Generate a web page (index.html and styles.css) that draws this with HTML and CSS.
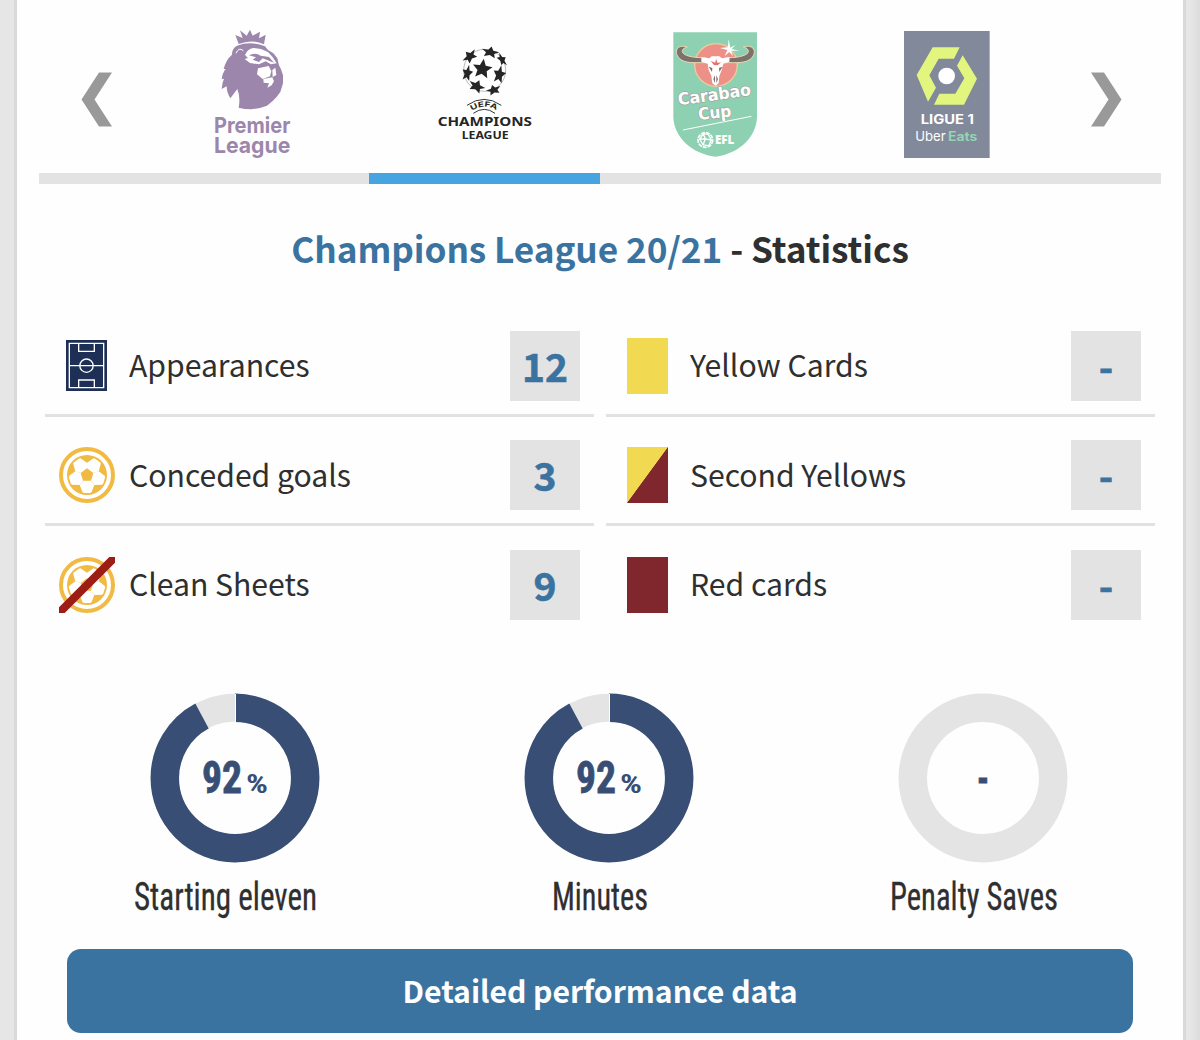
FILE: index.html
```html
<!DOCTYPE html>
<html lang="en">
<head>
<meta charset="utf-8">
<title>Champions League 20/21 - Statistics</title>
<link rel="stylesheet" href="styles.css">
</head>
<body>
<svg width="0" height="0" class="defs" aria-hidden="true">
  <defs>
    <polygon id="star" points="0,-10 2.8,-3.6 9.5,-3.1 4.5,1.5 5.9,8.1 0,4.7 -5.9,8.1 -4.5,1.5 -9.5,-3.1 -2.8,-3.6"/>
    <polygon id="lobe" points="0,0 -21.7,30 -13.5,52 -9,54 9,54 13.5,52 21.7,30"/>
    <g id="ball">
      <circle r="78" fill="#fff" stroke="#f1ba43" stroke-width="12"/>
      <circle r="60" fill="#f1ba43"/>
      <g fill="#fff">
        <use href="#lobe"/><use href="#lobe" transform="rotate(72)"/><use href="#lobe" transform="rotate(144)"/><use href="#lobe" transform="rotate(216)"/><use href="#lobe" transform="rotate(288)"/>
      </g>
      <polygon points="0,-20 19,-6 12,17 -12,17 -19,-6" fill="#f1ba43"/>
    </g>
  </defs>
</svg>
<main class="card">
  <nav class="tabs">
    <button class="arrow" aria-label="Previous"><svg width="99" height="173" viewBox="39 0 99 173"><path d="M99 72.500h13L94.500 99.500 112 126.500H99L81.500 99.500z" fill="#999"/></svg></button>
    <a class="tab">
      <svg width="231" height="173" viewBox="138 0 231 173">
        <g transform="translate(200 20) scale(.33333)">
          <path fill="#9c86ab" d="M116 72L106 45 128 54 120 31 140 47 150 29 158 47 180 35 177 55 197 44 192 73Q155 56 116 72z"/>
          <path fill="#9c86ab" d="M111 77Q153 62 195 79L204 90 220 100 232 115 237 136 243 148 249 166 249 190 241 216 229 232 218 243 201 257 180 264 154 268 134 267 116 263Q122 231 112 207L91 235Q80 218 80 199L65 207Q66 189 72 176L65 178Q67 159 77 147L71 147Q78 119 96 104Q96 84 111 77z"/>
          <path fill="#fff" d="M135 105Q142 87 160 84L183 87 204 96 217 110 230 130 213 133 197 124 177 133 150 129 134 117 144 114z"/>
          <path fill="#9c86ab" d="M147 106Q166 96 182 107L207 111 222 128 203 121 188 115 177 126 158 119 168 112z"/>
          <path fill="#fff" d="M174 145L206 138 214 153 210 169 188 177 171 163zM217 150L226 143 229 165 218 171zM190 177L217 172 222 184 215 196 202 203 207 190 191 188z"/>
          <path fill="none" stroke="#fff" stroke-width="3" d="M108 100Q116 80 130 92"/>
          <text x="42" y="340" class="logo-name" textLength="229" lengthAdjust="spacingAndGlyphs">Premier</text>
          <text x="42" y="399" class="logo-name" textLength="229" lengthAdjust="spacingAndGlyphs">League</text>
        </g>
      </svg>
    </a>
    <a class="tab active">
      <svg width="231" height="173" viewBox="369 0 231 173">
        <g transform="translate(425 35) scale(.33333)" fill="#252525">
          <circle cx="179" cy="106" r="63" fill="none" stroke="#999" stroke-width="2"/>
          <use href="#star" transform="translate(172 102) rotate(8) scale(3.1)"/>
          <use href="#star" transform="translate(196 52) rotate(12) scale(2.800 1.800)"/>
          <use href="#star" transform="translate(135 64) rotate(-42) scale(2.600 1.900)"/>
          <use href="#star" transform="translate(127 115) rotate(12) scale(1.700 2.600)"/>
          <use href="#star" transform="translate(155 154) rotate(24) scale(2.700 2)"/>
          <use href="#star" transform="translate(206 165) rotate(-18) scale(2.400 1.600)"/>
          <use href="#star" transform="translate(223 119) rotate(12) scale(2 2.900)"/>
          <use href="#star" transform="translate(231 74) rotate(58) scale(2.300 1.300)"/>
          <g fill="none" stroke="#333" stroke-width="3"><path d="M126 211Q177 175 229 211M145 235Q178 211 210 235"/></g>
          <path id="arc" d="M138 230Q178 200 221 231" fill="none"/>
          <text class="logo-sans" font-size="22" textLength="78" lengthAdjust="spacingAndGlyphs"><textPath href="#arc" startOffset="3">UEFA</textPath></text>
          <text x="38" y="274" class="logo-flare" font-size="39" textLength="283" lengthAdjust="spacingAndGlyphs">CHAMPIONS</text>
          <text x="110" y="311" class="logo-flare" font-size="30" textLength="141" lengthAdjust="spacingAndGlyphs">LEAGUE</text>
        </g>
      </svg>
    </a>
    <a class="tab">
      <svg width="231" height="173" viewBox="600 0 231 173">
        <g transform="translate(660 20) scale(.33333)">
          <path d="M40 37H291V292C289 350 238 402 166 410C94 402 42 350 40 292z" fill="#8dd0b2"/>
          <circle cx="168" cy="135" r="64" fill="#ed9188" stroke="#e8cf9c" stroke-width="4"/>
          <path fill="#7c716c" stroke="#e9d9b5" stroke-width="3" d="M82 81C50 71 40 96 58 115C75 132 105 127 137 128L137 113C105 114 76 109 68 98C64 91 70 84 82 81zM250 81C282 71 292 96 274 115C257 132 226 127 195 128L195 113C226 114 256 109 264 98C268 91 262 84 250 81z"/>
          <path fill="#fff" d="M124 112L148 115 155 109 178 109 186 115 209 112 208 125 190 131 185 151 178 168 176 190 167 197 157 190 154 167 146 150 143 131 124 125z"/>
          <path fill="#7c716c" d="M146 140L157 144 156 156zM188 140L177 144 178 156zM160 177L165 166V190zM174 177L169 166V190z"/>
          <path fill="#e66e6a" d="M152 123L166 128 168 116 173 129 183 127 173 136 162 135z"/>
          <path fill="#fff" d="M206 58L211 83 227 74 215 87 238 92 214 92 219 109 208 96 194 108 202 90 180 84 203 82z"/>
          <g class="logo-block" fill="#fff" stroke="#a3a29e" stroke-width="4" paint-order="stroke">
            <text transform="translate(56 256) rotate(-8)" font-size="50" textLength="221" lengthAdjust="spacingAndGlyphs">Carabao</text>
            <text transform="translate(116 300) rotate(-6)" font-size="50" textLength="100" lengthAdjust="spacingAndGlyphs">Cup</text>
          </g>
          <path d="M69 330L274 289" stroke="#fff" stroke-width="3"/>
          <circle cx="136" cy="360" r="22" fill="#8dd0b2" stroke="#fff" stroke-width="5" stroke-dasharray="12 3"/>
          <path d="M119 357L130 341 145 343 154 360 146 377 129 375zM130 341L136 357 119 357M136 357L154 360M136 357L129 375" stroke="#fff" stroke-width="4" fill="none"/>
          <text x="165" y="373" class="logo-heavy" fill="#fff" font-size="34" textLength="58" lengthAdjust="spacingAndGlyphs">EFL</text>
        </g>
      </svg>
    </a>
    <a class="tab">
      <svg width="231" height="173" viewBox="831 0 231 173">
        <g transform="translate(895 20) scale(.33333)">
          <rect x="27" y="33" width="257" height="381" fill="#82899b"/>
          <path fill="#e1f57f" d="M113 82H194L177 116H131L103 166 123 203 99 245 65 165zM203 106L246 176 207 254H117L133 221H181L208 175 186 137z"/>
          <circle cx="155" cy="168" r="25" fill="#fff"/>
          <text x="77" y="313" class="logo-sans" fill="#fff" font-size="38" textLength="160" lengthAdjust="spacingAndGlyphs">LIGUE 1</text>
          <text x="61" y="362" class="logo-light" fill="#fff" font-size="40" textLength="91" lengthAdjust="spacingAndGlyphs">Uber</text>
          <text x="159" y="362" class="logo-sans" fill="#93d4b3" font-size="38" textLength="88" lengthAdjust="spacingAndGlyphs">Eats</text>
        </g>
      </svg>
    </a>
    <button class="arrow" aria-label="Next"><svg width="99" height="173" viewBox="1062 0 99 173"><path d="M1104 72.500h-13L1108.500 99.500 1091 126.500h13L1121.500 99.500z" fill="#999"/></svg></button>
  </nav>
  <div class="track"><div class="thumb"></div></div>

  <h1><a>Champions League 20/21</a> - Statistics</h1>

  <section class="stats">
    <div class="row">
      <span class="icon"><svg class="pitch" width="41" height="51" viewBox="0 0 123 153"><path fill="#1d2f55" d="M0 0h123v153H0z"/><g fill="none" stroke="#fff" stroke-width="4"><path d="M10 10h103v133H10zM10 77h31M82 77h31M38 10v24h47V10M38 143v-23h47v23M41 77h41"/><circle cx="61.500" cy="77" r="20"/></g></svg></span>
      <span class="label">Appearances</span><span class="value">12</span>
    </div>
    <div class="row">
      <span class="icon"><i class="kard yellow"></i></span>
      <span class="label">Yellow Cards</span><span class="value">-</span>
    </div>
    <div class="row">
      <span class="icon"><svg width="56" height="56" viewBox="-84 -84 168 168"><use href="#ball"/></svg></span>
      <span class="label">Conceded goals</span><span class="value">3</span>
    </div>
    <div class="row">
      <span class="icon"><i class="kard second"></i></span>
      <span class="label">Second Yellows</span><span class="value">-</span>
    </div>
    <div class="row">
      <span class="icon"><svg width="56" height="56" viewBox="-84 -84 168 168"><use href="#ball"/><path d="M-84 84V67L67-84H84V-67L-67 84z" fill="#9c1c16"/></svg></span>
      <span class="label">Clean Sheets</span><span class="value">9</span>
    </div>
    <div class="row">
      <span class="icon"><i class="kard red"></i></span>
      <span class="label">Red cards</span><span class="value">-</span>
    </div>
  </section>

  <section class="charts">
    <figure>
      <svg class="donut" width="170" height="170" viewBox="-85 -85 170 170">
        <circle r="70.200" fill="none" stroke="#e4e4e4" stroke-width="28"/>
        <circle r="70.200" fill="none" stroke="#384e74" stroke-width="28.500" pathLength="100" stroke-dasharray="92.200 7.800" transform="rotate(-90)"/>
        <path d="M.500 -84V-56" stroke="#fff" stroke-width="1"/>
        <text x="-33" y="15" class="num" textLength="40" lengthAdjust="spacingAndGlyphs">92</text>
        <text x="11" y="15" class="pct" textLength="22" lengthAdjust="spacingAndGlyphs">%</text>
      </svg>
      <figcaption><svg width="184" height="50"><text x="0" y="37" textLength="183" lengthAdjust="spacingAndGlyphs">Starting eleven</text></svg></figcaption>
    </figure>
    <figure>
      <svg class="donut" width="170" height="170" viewBox="-85 -85 170 170">
        <circle r="70.200" fill="none" stroke="#e4e4e4" stroke-width="28"/>
        <circle r="70.200" fill="none" stroke="#384e74" stroke-width="28.500" pathLength="100" stroke-dasharray="92.200 7.800" transform="rotate(-90)"/>
        <path d="M.500 -84V-56" stroke="#fff" stroke-width="1"/>
        <text x="-33" y="15" class="num" textLength="40" lengthAdjust="spacingAndGlyphs">92</text>
        <text x="11" y="15" class="pct" textLength="22" lengthAdjust="spacingAndGlyphs">%</text>
      </svg>
      <figcaption><svg width="96" height="50"><text x="0" y="37" textLength="96" lengthAdjust="spacingAndGlyphs">Minutes</text></svg></figcaption>
    </figure>
    <figure>
      <svg class="donut" width="170" height="170" viewBox="-85 -85 170 170">
        <circle r="70.200" fill="none" stroke="#e4e4e4" stroke-width="28.500"/>
        <text x="-6" y="16" class="num" textLength="12" lengthAdjust="spacingAndGlyphs">-</text>
      </svg>
      <figcaption><svg width="168" height="50"><text x="0" y="37" textLength="168" lengthAdjust="spacingAndGlyphs">Penalty Saves</text></svg></figcaption>
    </figure>
  </section>

  <a class="cta">Detailed performance data</a>
</main>
</body>
</html>
```
FILE: styles.css
```css
* { box-sizing: border-box; }
body {
  margin: 0;
  height: 1040px;
  overflow: hidden;
  padding: 0 14px;
  background: linear-gradient(90deg, #e6e6e6 1190px, #dcdcdc 1200px);
  font-family: "Noto Sans CJK SC", "Noto Sans", sans-serif;
  color: #2f2f2f;
}
.defs { display: block; }
.card {
  height: 1040px;
  background: #fefefe;
  border: solid #d9d9d9;
  border-width: 0 3px;
  padding: 0 22px;
}
.tabs { display: flex; height: 173px; }
.tabs svg { display: block; }
.arrow { width: 99px; padding: 0; border: 0; background: none; }
.tab { width: 231px; }
.logo-name { font-family: Inter, sans-serif; font-size: 66px; font-weight: 700; fill: #9c86ab; }
.logo-sans { font-family: Inter, sans-serif; font-weight: 700; }
.logo-heavy { font-family: "Open Sans", sans-serif; font-weight: 800; }
.logo-light { font-family: Inter, sans-serif; font-weight: 400; }
.logo-flare { font-family: "Noto Sans", sans-serif; font-weight: 700; }
.logo-block { font-family: "DejaVu Sans", sans-serif; font-weight: 700; }
.track { height: 11px; padding-left: 330px; background: #e3e3e3; }
.thumb { width: 231px; height: 11px; background: #46a5e1; }
h1 {
  margin: 36px 0 0;
  height: 56px;
  line-height: 56px;
  font-size: 35.2px;
  font-weight: 700;
  letter-spacing: -.08px;
  text-align: center;
  white-space: nowrap;
}
h1 a { color: #3b73a0; }
.stats {
  display: grid;
  grid-template-columns: 549px 549px;
  grid-auto-rows: 109.500px;
  column-gap: 12px;
  margin: 31px 6px 0;
}
.row {
  display: flex;
  align-items: center;
  padding: 11px 14px 0;
  border-bottom: 3px solid #e2e2e2;
}
.row:nth-last-child(-n+2) { border-bottom-color: transparent; }
.icon { width: 56px; display: flex; justify-content: center; }
.icon svg { display: block; }
.icon .pitch { margin-right: 1px; }
.kard { width: 41px; height: 56px; margin-right: 1px; }
.yellow { background: #f2d952; }
.second { background: linear-gradient(to bottom right, #f2d952 49.500%, #80262d 50.500%); }
.red { background: #80262d; }
.label {
  flex: 1;
  padding: 0 0 3px 14px;
  font-size: 30.200px;
  letter-spacing: -.03px;
  line-height: 50px;
}
.value {
  width: 70px;
  height: 70px;
  background: #e3e3e3;
  color: #3b73a0;
  font-size: 39px;
  font-weight: 700;
  -webkit-text-stroke: .6px #3b73a0;
  line-height: 68px;
  text-align: center;
}
.charts { display: grid; grid-template-columns: repeat(3, 374px); margin-top: 57px; }
figure { margin: 0; display: flex; flex-direction: column; align-items: center; }
.donut { margin-left: 18px; }
.donut text { fill: #384e74; stroke: #384e74; font-family: Roboto, sans-serif; font-weight: 700; font-stretch: 75%; }
.donut .num { font-size: 45px; stroke-width: .8px; }
.donut .pct { font-size: 26px; stroke-width: 0; }
figcaption { margin-top: 10px; height: 50px; }
figcaption svg { display: block; overflow: visible; }
figcaption text { font-family: Roboto, sans-serif; font-size: 38px; font-stretch: 75%; fill: #2f2f2f; stroke: #2f2f2f; stroke-width: .3px; }
.cta {
  display: block;
  margin: 26px 28px 0;
  height: 84px;
  border-radius: 14px;
  background: #3b73a0;
  color: #fff;
  font-size: 30.200px;
  font-weight: 700;
  letter-spacing: -.06px;
  line-height: 82px;
  text-align: center;
}
```
